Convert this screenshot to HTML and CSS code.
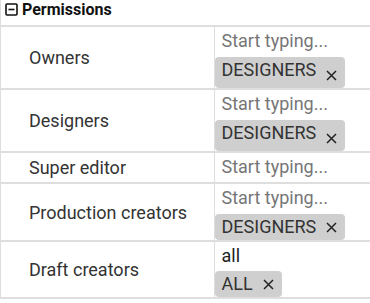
FILE: index.html
```html
<!DOCTYPE html>
<html lang="en">

<head>
    <meta charset="utf-8">
    <title>Permissions</title>
    <link rel="stylesheet" href="styles.css">
</head>

<body>
    <section class="perm">
        <h3 class="perm_head">
            <svg class="toggle" width="13" height="13" viewBox="0 0 13 13">
                <rect x="1" y="1" width="11" height="11" rx="1" fill="none" stroke="#111" stroke-width="1.6"/>
                <line x1="3.5" y1="6.5" x2="9.5" y2="6.5" stroke="#111" stroke-width="1.6"/>
            </svg>
            Permissions
        </h3>
        <table class="perm_table">
            <tr>
                <td class="label">Owners</td>
                <td class="field">
                    <div class="input placeholder">Start typing...</div>
                    <span class="tag tall">DESIGNERS<svg class="x" width="11" height="11" viewBox="0 0 11 11"><path d="M1 1L10 10M10 1L1 10" stroke="#222" stroke-width="1.5"/></svg></span>
                </td>
            </tr>
            <tr>
                <td class="label">Designers</td>
                <td class="field">
                    <div class="input placeholder">Start typing...</div>
                    <span class="tag tall">DESIGNERS<svg class="x" width="11" height="11" viewBox="0 0 11 11"><path d="M1 1L10 10M10 1L1 10" stroke="#222" stroke-width="1.5"/></svg></span>
                </td>
            </tr>
            <tr>
                <td class="label">Super editor</td>
                <td class="field">
                    <div class="input placeholder">Start typing...</div>
                </td>
            </tr>
            <tr>
                <td class="label">Production creators</td>
                <td class="field">
                    <div class="input placeholder">Start typing...</div>
                    <span class="tag">DESIGNERS<svg class="x" width="11" height="11" viewBox="0 0 11 11"><path d="M1 1L10 10M10 1L1 10" stroke="#222" stroke-width="1.5"/></svg></span>
                </td>
            </tr>
            <tr>
                <td class="label">Draft creators</td>
                <td class="field">
                    <div class="input value">all</div>
                    <span class="tag flush">ALL<svg class="x" width="11" height="11" viewBox="0 0 11 11"><path d="M1 1L10 10M10 1L1 10" stroke="#222" stroke-width="1.5"/></svg></span>
                </td>
            </tr>
        </table>
    </section>
</body>

</html>
```

FILE: styles.css
```css
* {
    margin: 0;
    padding: 0;
    box-sizing: border-box;
}

body {
    background-color: #fff;
    font-family: Roboto, 'Open Sans', sans-serif;
}

.perm {
    border-left: 1px solid #dedede;
    width: 370px;
}

.perm_head {
    display: flex;
    align-items: center;
    gap: 4px;
    height: 25px;
    padding-left: 4px;
    padding-bottom: 6px;
    font-size: 16px;
    font-weight: 700;
    color: #111;
}

.perm_table {
    width: 100%;
    border-collapse: collapse;
}

.perm_table td {
    border-top: 2px solid #dedede;
    border-bottom: 2px solid #dedede;
}

.label {
    width: 213px;
    padding-left: 28px;
    font-size: 18px;
    color: #333;
    border-right: 1px solid #dedede;
}

.field {
    padding: 0;
    vertical-align: top;
}

.input {
    height: 29px;
    line-height: 28px;
    padding-left: 7px;
    font-size: 18px;
}

.placeholder {
    color: #767676;
}

.value {
    color: #222;
}

.tag {
    display: inline-block;
    margin-top: 1px;
    padding: 0 8px 0 7px;
    height: 26px;
    line-height: 26px;
    font-size: 18px;
    color: #333;
    background-color: #cfcfcf;
    border-radius: 4px;
}

.tag.tall {
    height: 31px;
}

.tag.flush {
    margin-top: 0;
}

.x {
    margin-left: 10px;
    vertical-align: 0;
}

.tall .x {
    vertical-align: -5px;
}
```
